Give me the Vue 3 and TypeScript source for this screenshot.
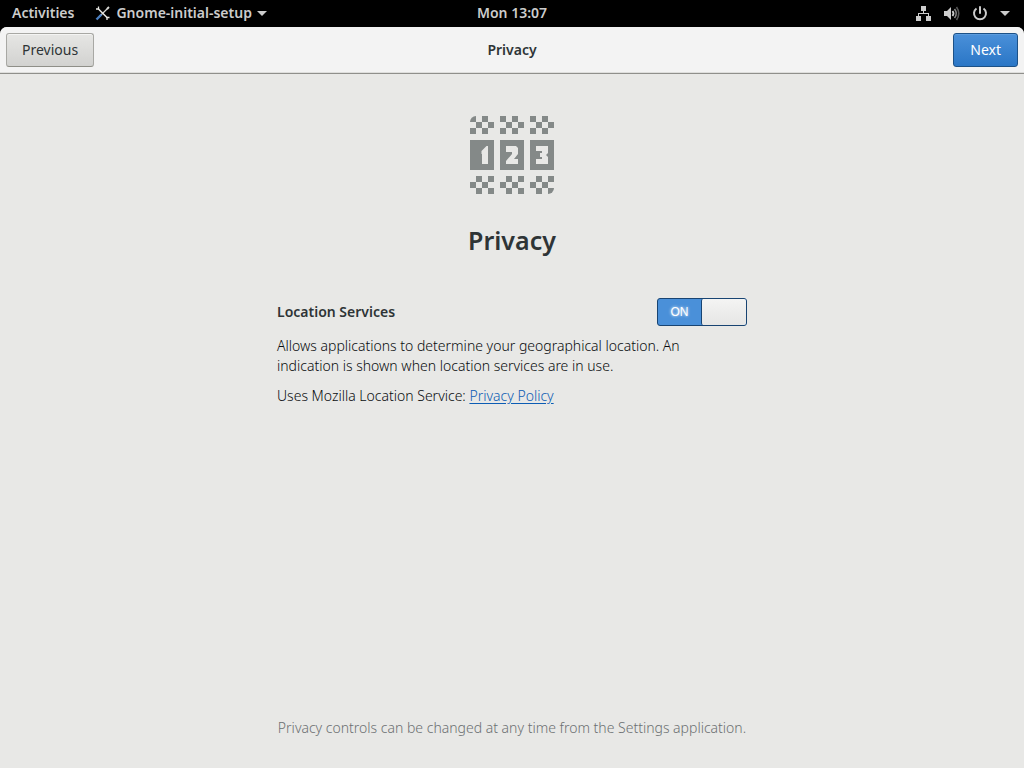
<script setup lang="ts">
import { ref } from 'vue'

const locationEnabled = ref(true)

const cell = 6
const groups = [0, 30, 60]
const topCells = [[0, 0], [2, 0], [1, 1], [3, 1], [0, 2], [2, 2]]
const bottomCells = [[1, 0], [3, 0], [0, 1], [2, 1], [1, 2], [3, 2]]

const checks: { x: number; y: number }[] = []
for (const gx of groups) {
  for (const [cx, cy] of topCells) checks.push({ x: gx + cx * cell, y: cy * cell })
  for (const [cx, cy] of bottomCells) checks.push({ x: gx + cx * cell, y: 60 + cy * cell })
}
</script>

<template>
  <div class="screen">
    <nav class="topbar" aria-label="System">
      <div class="side">
        <button class="bar-item" type="button">Activities</button>
        <button class="bar-item app" type="button">
          <svg width="16" height="16" viewBox="0 0 16 16" aria-hidden="true">
            <path d="M13 3 4.500 11.500" stroke="#d8d8d4" stroke-width="1.200" />
            <path d="M1.500 14.500 6.500 9.500" stroke="#4a7fc0" stroke-width="2.400" />
            <path d="M3 3.500 12.500 13" stroke="#e8e8e4" stroke-width="1.500" />
            <path d="M1 4 3.500 4 3.500 1.500M12 15 12 12.500 14.500 12.500" fill="none" stroke="#e8e8e4" stroke-width="1.300" />
            <path d="M12 4 14 2" stroke="#d8d8d4" stroke-width="1.800" />
          </svg>
          <span>Gnome-initial-setup</span>
          <svg class="arrow" width="10" height="5" viewBox="0 0 10 5" aria-hidden="true"><path d="M0 0H10L5 5Z" fill="#ccc" /></svg>
        </button>
      </div>
      <button class="bar-item" type="button">Mon 13:07</button>
      <div class="side end">
        <button class="bar-item status" type="button" aria-label="System menu">
          <svg width="16" height="16" viewBox="0 0 16 16" fill="#ccc" aria-hidden="true">
            <path d="M5 1h5v5H5zM0 11h5v5H0zM10 11h5v5h-5zM7 6h1v2H7zM2 8h11v3h-1V9H3v2H2z" />
          </svg>
          <svg width="16" height="16" viewBox="0 0 16 16" aria-hidden="true">
            <path d="M0 6h3l4-4v13l-4-4H0z" fill="#ccc" />
            <path d="M8.500 6q2 2.500 0 5" fill="none" stroke="#ccc" stroke-width="1.800" />
            <path d="M10.500 4q3.500 4.500 0 9" fill="none" stroke="#888" stroke-width="1.600" />
            <path d="M12.500 2q4.500 6.500 0 13" fill="none" stroke="#555" stroke-width="1.600" />
          </svg>
          <svg width="16" height="16" viewBox="0 0 16 16" fill="none" stroke="#ccc" stroke-width="2" aria-hidden="true">
            <path d="M4.500 3.500A6 6 0 1 0 11.500 3.500" />
            <path d="M8 2V8" stroke-linecap="round" />
          </svg>
          <svg class="arrow" width="10" height="5" viewBox="0 0 10 5" aria-hidden="true"><path d="M0 0H10L5 5Z" fill="#ccc" /></svg>
        </button>
      </div>
    </nav>

    <div class="window">
      <header class="header">
        <div class="side"><button class="button" type="button">Previous</button></div>
        <span class="title">Privacy</span>
        <div class="side end"><button class="button suggested" type="button">Next</button></div>
      </header>

      <main class="page">
        <svg class="emblem" width="84" height="78" viewBox="0 0 84 78" fill="#848988" aria-hidden="true">
          <clipPath id="emblem-clip">
            <path d="M6 0H84V72A6 6 0 0 1 78 78H0V6A6 6 0 0 1 6 0Z" />
          </clipPath>
          <g clip-path="url(#emblem-clip)">
            <rect v-for="(c, i) in checks" :key="i" :x="c.x" :y="c.y" width="6" height="6" />
          </g>
          <rect v-for="g in groups" :key="g" :x="g" y="24" width="24" height="30" />
          <g fill="#e8e8e6">
            <path d="M18 30V48H12V38H11.500V35L16.500 30Z" />
            <path d="M36 30H46L48 32V38L44 43H48V48H36V45L42 38V36H36Z" />
            <path d="M66 30H78V37L76 39L78 41V48H66V43H72V41H70V37H72V35H66Z" />
          </g>
        </svg>

        <h1>Privacy</h1>

        <section class="setting">
          <div class="row">
            <label for="location">Location Services</label>
            <span class="switch">
              <input id="location" v-model="locationEnabled" type="checkbox" role="switch" />
              <span class="state" aria-hidden="true">{{ locationEnabled ? 'ON' : 'OFF' }}</span>
              <span class="knob"></span>
            </span>
          </div>
          <p>Allows applications to determine your geographical location. An indication is shown when location services are in use.</p>
          <p>Uses Mozilla Location Service: <a href="#privacy-policy">Privacy Policy</a></p>
        </section>

        <footer>Privacy controls can be changed at any time from the Settings application.</footer>
      </main>
    </div>
  </div>
</template>

<style>
body {
  margin: 0;
  background: #000;
}
</style>

<style scoped>
.screen {
  display: flex;
  flex-direction: column;
  min-height: 100vh;
  font-family: "Noto Sans", "Open Sans", sans-serif;
  font-size: 14px;
  line-height: 20px;
  color: #2e3436;
}
button {
  font: inherit;
}
.side {
  display: flex;
  flex: 1 1 0;
}
.end {
  justify-content: flex-end;
}
.topbar {
  display: flex;
  align-items: center;
  box-sizing: border-box;
  height: 27px;
  padding-bottom: 2px;
  color: #ccc;
  font-weight: 600;
}
.bar-item {
  display: flex;
  align-items: center;
  padding: 0 12px;
  border: 0;
  background: none;
  color: inherit;
  white-space: nowrap;
}
.app {
  gap: 5px;
  padding: 0 9px;
}
.status {
  gap: 12px;
  padding: 0 14px;
}
.arrow {
  margin-top: 2px;
}
.window {
  display: flex;
  flex: 1;
  flex-direction: column;
  border-radius: 7px 7px 0 0;
  background: #e8e8e6;
  overflow: hidden;
}
.header {
  display: flex;
  align-items: center;
  padding: 6px;
  border-bottom: 1px solid #8f8f8b;
  background: #f3f3f3;
  box-shadow: inset 0 -1px #dededc;
}
.title {
  font-weight: 600;
}
.button {
  height: 34px;
  padding: 0 15px;
  border: 1px solid #a8a8a4;
  border-bottom-color: #8f8f88;
  border-radius: 3px;
  background: linear-gradient(#e6e6e4, #d2d2d0);
  box-shadow: inset 0 1px #f4f4f3;
  color: #2e3436;
}
.suggested {
  padding: 0 16px;
  border-color: #1c5187;
  background: linear-gradient(#4a90d9, #2a76c6);
  box-shadow: inset 0 1px #5c9cde;
  color: #fff;
}
.page {
  display: flex;
  flex: 1;
  flex-direction: column;
  align-items: center;
  padding: 42px 24px 30px;
}
h1 {
  margin: 29px 0 41px;
  font-size: 25px;
  font-weight: 600;
  line-height: 34px;
}
.setting {
  width: 100%;
  max-width: 470px;
}
.row {
  display: flex;
  align-items: center;
  justify-content: space-between;
  font-weight: 600;
}
p,
footer {
  font-weight: 300;
}
.setting p {
  max-width: 420px;
  margin: 10px 0 0;
  color: #080c0e;
}
a {
  color: #0c5cb4;
  text-underline-offset: 2px;
}
.switch {
  position: relative;
  display: flex;
  box-sizing: border-box;
  width: 90px;
  height: 28px;
  border: 1px solid #184472;
  border-radius: 3px;
  background: #4a90d9;
}
.switch input {
  position: absolute;
  inset: 0;
  width: 100%;
  height: 100%;
  margin: 0;
  opacity: 0;
}
.state {
  flex: 1;
  color: #fff;
  font-family: "Liberation Sans", Arial, sans-serif;
  font-size: 12px;
  font-weight: 400;
  line-height: 26px;
  text-align: center;
  text-shadow: 0 0 3px #fff;
}
.knob {
  box-sizing: border-box;
  width: 45px;
  border-left: 1px solid #184472;
  border-radius: 2px;
  background: linear-gradient(#f4f4f3, #e6e6e5);
}
.switch:has(input:not(:checked)) {
  flex-direction: row-reverse;
  background: #c4c4c2;
}
footer {
  margin-top: auto;
  color: #6c7072;
}
</style>
